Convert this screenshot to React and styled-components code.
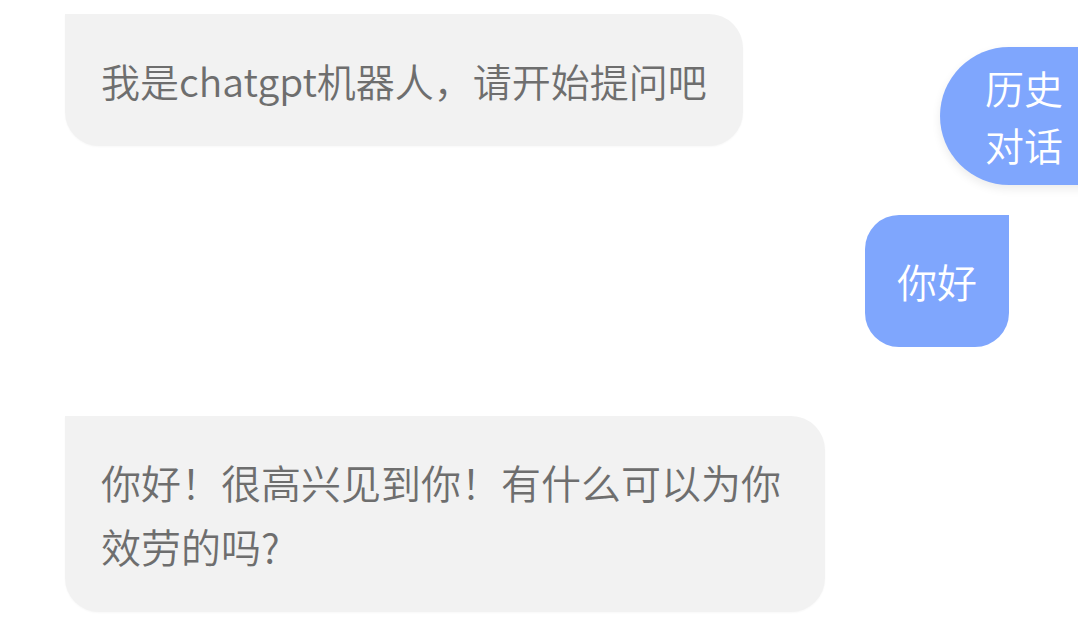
import styled, { createGlobalStyle } from 'styled-components'

const GlobalStyle = createGlobalStyle`
  html, body {
    margin: 0;
    padding: 0;
    background: #ffffff;
    font-family: "Noto Sans CJK SC", "Noto Sans", sans-serif;
  }
`

const Page = styled.div`
  position: relative;
  width: 1078px;
  height: 626px;
  overflow: hidden;
  background: #ffffff;
`

const MessageList = styled.div`
  display: flex;
  flex-direction: column;
  gap: 69px;
  padding: 14px 69px 0 65px;
`

const Row = styled.div`
  display: flex;
  justify-content: ${(p) => (p.$mine ? 'flex-end' : 'flex-start')};
`

const Bubble = styled.div`
  box-sizing: border-box;
  max-width: 760px;
  padding: ${(p) => (p.$mine ? '34px 32px' : '34px 36px')};
  font-size: ${(p) => p.$size}px;
  font-weight: 350;
  line-height: 64px;
  text-spacing-trim: space-all;
  color: ${(p) => (p.$mine ? '#ffffff' : '#6e6e6e')};
  background: ${(p) => (p.$mine ? '#7fa6fd' : '#f2f2f2')};
  border-radius: ${(p) => (p.$mine ? '34px 0 34px 34px' : '0 34px 34px 34px')};
  box-shadow: ${(p) => (p.$mine ? 'none' : '0 1px 2px rgba(0, 0, 0, 0.03)')};
  word-break: break-all;
`

const HistoryButton = styled.div`
  position: absolute;
  top: 47px;
  left: 940px;
  box-sizing: border-box;
  width: 170px;
  height: 138px;
  padding: 12px 0 0 45px;
  border-radius: 69px 0 0 69px;
  background: #7fa6fd;
  color: #ffffff;
  font-size: 39px;
  font-weight: 350;
  line-height: 57px;
  box-shadow: 0 4px 10px rgba(0, 0, 0, 0.08);
  cursor: pointer;
`

const messages = [
  { mine: false, size: 39, text: '我是chatgpt机器人，请开始提问吧' },
  { mine: true, size: 40, text: '你好' },
  { mine: false, size: 40, text: '你好！很高兴见到你！有什么可以为你效劳的吗?' },
]

export default function App() {
  return (
    <>
      <GlobalStyle />
      <Page>
        <MessageList>
          {messages.map((m, i) => (
            <Row key={i} $mine={m.mine}>
              <Bubble $mine={m.mine} $size={m.size}>
                {m.text}
              </Bubble>
            </Row>
          ))}
        </MessageList>
        <HistoryButton>
          历史
          <br />
          对话
        </HistoryButton>
      </Page>
    </>
  )
}
